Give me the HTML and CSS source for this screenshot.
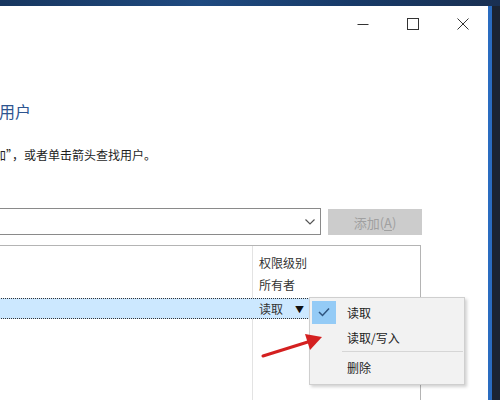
FILE: index.html
```html
<!DOCTYPE html>
<html lang="zh-CN">
<head>
<meta charset="utf-8">
<link rel="stylesheet" href="styles.css">
</head>
<body>
<div class="topband"></div>
<div class="stage">
  <div class="window">
    <div class="titlebar">
      <div class="tb-btn">
        <svg width="12" height="12" viewBox="0 0 12 12"><line x1="0.5" y1="6.5" x2="11.5" y2="6.5" stroke="#333" stroke-width="1"/></svg>
      </div>
      <div class="tb-btn">
        <svg width="12" height="12" viewBox="0 0 12 12"><rect x="0.5" y="0.5" width="11" height="11" fill="none" stroke="#333" stroke-width="1"/></svg>
      </div>
      <div class="tb-btn">
        <svg width="12" height="12" viewBox="0 0 12 12"><path d="M0.5 0.5 L11.5 11.5 M11.5 0.5 L0.5 11.5" stroke="#333" stroke-width="1"/></svg>
      </div>
    </div>
    <div class="content">
      <div class="main-title">用户</div>
      <div class="hint">加”，或者单击箭头查找用户。</div>
      <div class="combo-row">
        <div class="combo">
          <svg class="chev" width="10" height="6" viewBox="0 0 10 6"><path d="M0.5 0.5 L5 5 L9.5 0.5" fill="none" stroke="#555" stroke-width="1.2"/></svg>
        </div>
        <div class="add-btn">添加(<u>A</u>)</div>
      </div>
      <div class="listbox">
        <div class="row"><span class="cell">权限级别</span></div>
        <div class="row"><span class="cell">所有者</span></div>
        <div class="row selected"><span class="cell">读取<span class="tri">▼</span></span></div>
      </div>
    </div>

    <div class="menu">
      <div class="mitem">
        <span class="check">
          <svg width="12" height="10" viewBox="0 0 12 10"><path d="M1 5 L4.5 8.5 L11 1.5" fill="none" stroke="#2f557f" stroke-width="1.5"/></svg>
        </span>
        <span class="mlabel">读取</span>
      </div>
      <div class="mitem tall"><span class="check empty"></span><span class="mlabel">读取/写入</span></div>
      <div class="msep"></div>
      <div class="mitem last"><span class="check empty"></span><span class="mlabel">删除</span></div>
    </div>

    <svg class="arrow" width="70" height="30" viewBox="0 0 70 30">
      <line x1="2" y1="25" x2="50" y2="10" stroke="#d42020" stroke-width="3" stroke-linecap="round"/>
      <polygon points="61,6 44,3 49,19" fill="#d42020"/>
    </svg>
  </div>
</div>
</body>
</html>
```

FILE: styles.css
```css
html, body {
  margin: 0;
  padding: 0;
}
body {
  width: 500px;
  height: 400px;
  overflow: hidden;
  background: #1b2433;
  font-family: "Noto Sans CJK SC", "Liberation Sans", sans-serif;
}
.topband {
  height: 6px;
  background: linear-gradient(90deg, #17365f 0%, #1f4a80 40%, #173a68 70%, #1a3052 100%);
}
.stage {
  display: flex;
  height: 394px;
}
.window {
  position: relative;
  width: 488px;
  height: 394px;
  background: #ffffff;
  border-right: 4px solid #2a6cc0;
  overflow: hidden;
}
.titlebar {
  height: 34px;
  display: flex;
  justify-content: flex-end;
  padding-right: 1px;
}
.tb-btn {
  width: 50px;
  height: 34px;
  display: flex;
  align-items: center;
  justify-content: center;
}
.tb-btn svg {
  margin-left: 1px;
  margin-top: 1px;
}
.content {
  padding-top: 60px;
}
.main-title {
  font-size: 16px;
  line-height: 22px;
  color: #2e5590;
  margin-left: -1px;
}
.hint {
  margin-top: 25px;
  font-size: 12px;
  line-height: 16px;
  color: #1e1e1e;
  margin-left: -6px;
  white-space: nowrap;
}
.combo-row {
  margin-top: 45px;
  display: flex;
  align-items: flex-start;
  gap: 7px;
  margin-left: -10px;
}
.combo {
  width: 329px;
  height: 25px;
  border: 1px solid #8a8a8a;
  background: #fff;
  display: flex;
  align-items: center;
  justify-content: flex-end;
  padding-right: 5px;
  box-sizing: content-box;
  width: 324px;
}
.chev {
  margin-top: 1px;
}
.add-btn {
  margin-top: 1px;
  width: 94px;
  height: 26px;
  background: #cccccc;
  color: #a0a0a0;
  font-size: 13px;
  display: flex;
  align-items: center;
  justify-content: center;
}
.add-btn u {
  text-decoration-thickness: 1px;
  text-underline-offset: 2px;
}
.listbox {
  margin-top: 10px;
  margin-left: -10px;
  width: 431px;
  height: 200px;
  border: 1px solid #b4b4b4;
  padding-top: 5px;
  box-sizing: border-box;
  background: #fff linear-gradient(#e3e3e3, #e3e3e3) no-repeat 261px 0 / 1px 100%;
}
.row {
  height: 22px;
  display: flex;
  align-items: center;
  padding-left: 268px;
  font-size: 12px;
  color: #333;
}
.row.selected {
  margin-top: 3px;
  height: 19px;
  background: #cce8ff;
  border-top: 1px dotted #333;
  border-bottom: 1px dotted #333;
}
.tri {
  font-size: 9px;
  margin-left: 12px;
  color: #111;
  position: relative;
  top: -1px;
}
.menu {
  position: absolute;
  left: 309px;
  top: 291px;
  width: 154px;
  height: 84px;
  background: #f2f2f2;
  border: 1px solid #cfcfcf;
  box-shadow: 2px 2px 3px rgba(0,0,0,0.18);
  padding-top: 2px;
  box-sizing: content-box;
}
.mitem {
  display: flex;
  align-items: center;
  height: 24px;
  font-size: 12px;
  color: #222;
}
.mitem.tall {
  height: 26px;
}
.mitem.last {
  height: 28px;
}
.check {
  width: 24px;
  height: 23px;
  margin-left: 2px;
  background: #94cbf6;
  display: flex;
  align-items: center;
  justify-content: center;
}
.check.empty {
  background: transparent;
}
.mlabel {
  margin-left: 11px;
}
.msep {
  height: 1px;
  background: #d6d6d6;
  margin: 1px 1px 1px 32px;
}
.arrow {
  position: absolute;
  left: 261px;
  top: 325px;
}
```
